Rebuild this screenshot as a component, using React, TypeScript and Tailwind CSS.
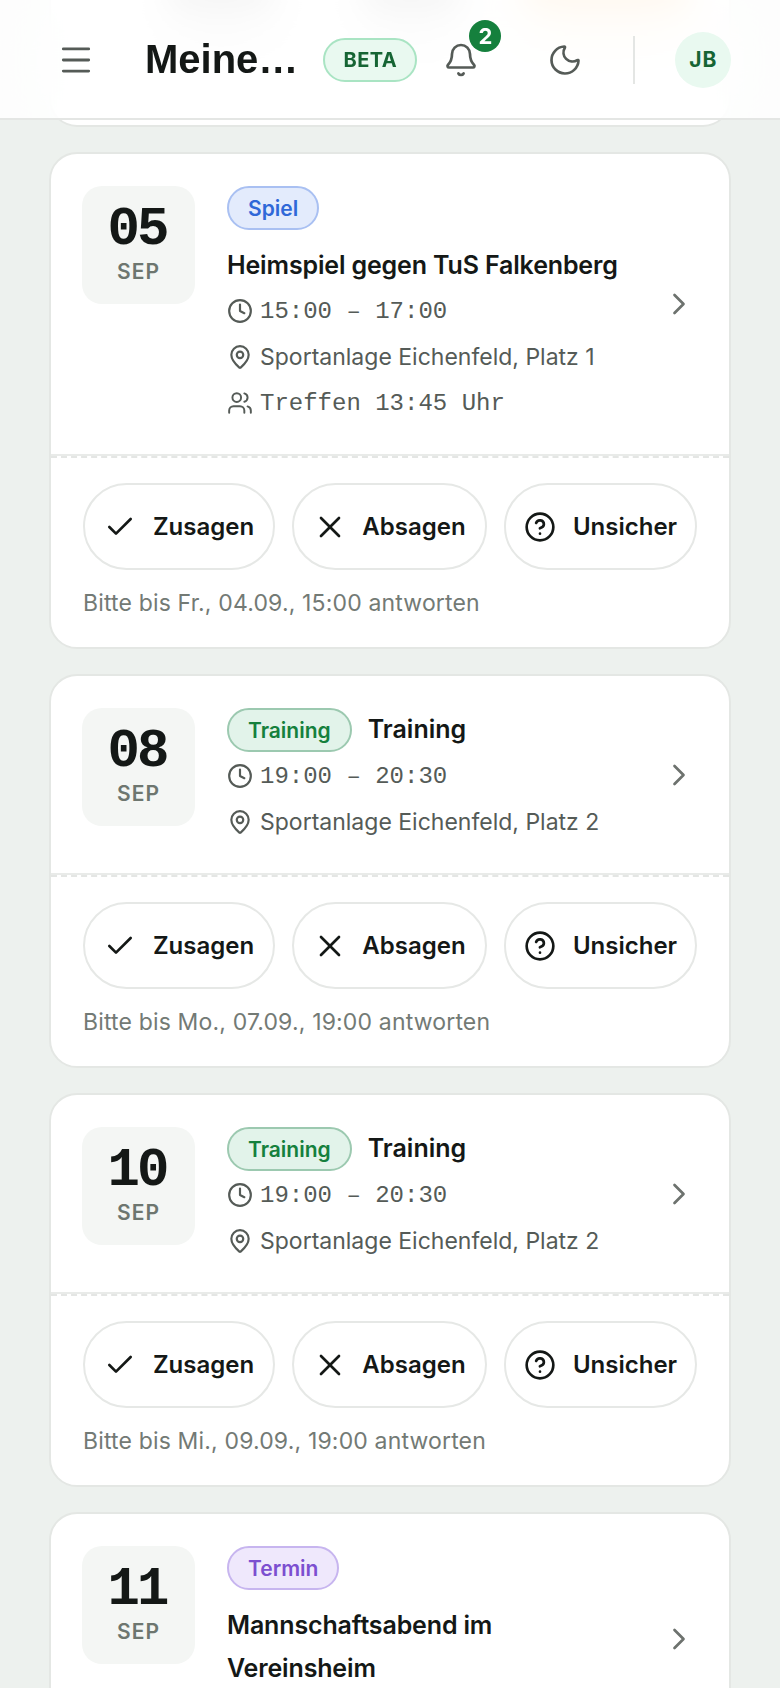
import { Bell, Check, ChevronRight, CircleHelp, Clock, MapPin, Menu, Moon, Users, X } from "lucide-react";

const SANS = "font-['Inter','Noto_Sans',sans-serif]";

type Rsvp = { date: string; month: string; kind: "Spiel" | "Training" | "Termin" };

const KIND_STYLES = {
  Spiel: "bg-[#e3ebfc] border-[#a9c0f2] text-[#2f68d8]",
  Training: "bg-[#e2f3ea] border-[#9cc9b0] text-[#15803d]",
  Termin: "bg-[#efe8fc] border-[#c7b5ef] text-[#7c4fd0]",
};

function Chip({ kind }: { kind: Rsvp["kind"] }) {
  return (
    <span
      className={`inline-flex h-[44px] items-center rounded-full border-2 px-[19px] pt-[1px] text-[21px] font-semibold ${KIND_STYLES[kind]}`}
    >
      {kind}
    </span>
  );
}

function DateBox({ day }: { day: string }) {
  return (
    <div className="flex h-[118px] w-[113px] shrink-0 flex-col items-center rounded-[20px] bg-[#f4f6f4] pt-[16px]">
      <span className="pr-[3px] font-['Liberation_Mono',monospace] text-[54px] leading-[56px] font-bold tracking-[-3px] text-[#141816]">
        {day}
      </span>
      <span className="text-[21px] leading-[28px] font-semibold tracking-[1px] text-[#6d766f]">SEP</span>
    </div>
  );
}

function MetaRow({ icon, children, mono }: { icon: React.ReactNode; children: React.ReactNode; mono?: boolean }) {
  return (
    <div
      className={`flex h-[46px] items-center gap-[7px] text-[#555b57] ${
        mono ? "font-['Liberation_Mono',monospace] text-[24px]" : "text-[23px]"
      }`}
    >
      <span className="flex w-[26px] shrink-0 justify-center">{icon}</span>
      <span className={mono ? "pt-[2px]" : ""}>{children}</span>
    </div>
  );
}

function RsvpButton({ icon, label, width }: { icon: React.ReactNode; label: string; width: string }) {
  return (
    <button
      className={`flex h-[87px] items-center justify-center gap-[17px] rounded-full border-2 border-[#e6e8e6] bg-white text-[24px] font-semibold text-[#141816] ${width}`}
    >
      {icon}
      {label}
    </button>
  );
}

function Actions({ deadline }: { deadline: string }) {
  return (
    <div className="border-t-2 border-dashed border-[#e4e6e4] px-[32px] pt-[25px] pb-[28px]">
      <div className="flex gap-[17px]">
        <RsvpButton width="w-[192px]" label="Zusagen" icon={<Check size={32} strokeWidth={2} />} />
        <RsvpButton
          width="w-[195px]"
          label="Absagen"
          icon={<X className="-mr-[3px] -ml-[1px]" size={36} strokeWidth={1.8} />}
        />
        <RsvpButton width="w-[193px]" label="Unsicher" icon={<CircleHelp size={32} strokeWidth={2} />} />
      </div>
      <p className="mt-[17px] text-[23px] leading-[32px] tracking-[0.16px] text-[#737a75]">{deadline}</p>
    </div>
  );
}

const clock = <Clock size={26} strokeWidth={2} />;
const pin = <MapPin size={26} strokeWidth={2} />;
const users = <Users size={26} strokeWidth={1.8} />;

function Card({ children, deadline }: { children: React.ReactNode; deadline?: string }) {
  return (
    <section className="rounded-[28px] border-2 border-[#e4e7e4] bg-white">
      <div
        className={`flex items-center pt-[32px] pr-[32px] pb-[28px] pl-[31px] ${
          deadline ? "border-b-2 border-[#e9ebe9]" : ""
        }`}
      >
        {children}
        <ChevronRight className="ml-auto -mt-[4px] shrink-0 text-[#6d726e]" size={36} strokeWidth={1.8} />
      </div>
      {deadline && <Actions deadline={deadline} />}
    </section>
  );
}

function TrainingCard({ day, deadline }: { day: string; deadline: string }) {
  return (
    <Card deadline={deadline}>
      <div className="flex flex-1 gap-[32px] self-start">
        <DateBox day={day} />
        <div>
          <div className="flex items-center gap-[16px]">
            <Chip kind="Training" />
            <span className="text-[25px] font-semibold text-[#141816]">Training</span>
          </div>
          <div className="mt-[1px]">
            <MetaRow mono icon={clock}>19:00 – 20:30</MetaRow>
            <MetaRow icon={pin}>Sportanlage Eichenfeld, Platz 2</MetaRow>
          </div>
        </div>
      </div>
    </Card>
  );
}

export default function App() {
  return (
    <div className={`relative h-[1688px] overflow-hidden bg-[#edf1ee] ${SANS}`}>
      {/* header sits over the scrolled list */}
      <header className="absolute inset-x-0 top-0 z-10 flex h-[120px] items-center border-b-2 border-[#e4e6e4] bg-white/85 pt-[2px] pl-[57px] backdrop-blur-[28px]">
        <Menu className="shrink-0 text-[#555b57]" size={38} strokeWidth={1.8} />
        <h1 className="ml-[50px] -mt-[2px] font-['Liberation_Sans',sans-serif] text-[40px] font-bold text-[#141816]">
          Meine…
        </h1>
        <span className="ml-[25px] flex h-[44px] w-[94px] items-center justify-center rounded-full border-2 border-[#a9e4c3] bg-[#e9f9f0] text-[20px] font-bold tracking-[0.5px] text-[#166534]">
          BETA
        </span>
        <span className="relative ml-[26px]">
          <Bell className="text-[#555b57]" size={36} strokeWidth={1.8} />
          <span className="absolute -top-[22px] left-[26px] flex h-[32px] w-[32px] items-center justify-center rounded-full bg-[#15803d] text-[22px] font-bold text-white">
            2
          </span>
        </span>
        <Moon className="ml-[68px] text-[#555b57]" size={36} strokeWidth={1.8} />
        <span className="ml-[50px] h-[48px] w-[2px] bg-[#e4e6e4]" />
        <span className="ml-[40px] flex h-[56px] w-[56px] items-center justify-center rounded-full bg-[#e9f9f0] text-[21px] font-bold tracking-[1px] text-[#166534]">
          JB
        </span>
      </header>

      <main className="flex flex-col gap-[25px] px-[49px]">
        {/* previous card, scrolled mostly under the header */}
        <section className="relative h-[127px] overflow-hidden rounded-b-[28px] border-2 border-t-0 border-[#e4e7e4] bg-white">
          <span className="absolute top-[-20px] left-[115px] h-[40px] w-[110px] rounded-full bg-[#a8a8a8] blur-[16px]" />
          <span className="absolute top-[-20px] left-[310px] h-[40px] w-[100px] rounded-full bg-[#a8a8a8] blur-[16px]" />
          <span className="absolute top-[-20px] left-[470px] h-[40px] w-[170px] rounded-full bg-[#f8c47e] blur-[16px]" />
        </section>

        <Card deadline="Bitte bis Fr., 04.09., 15:00 antworten">
          <div className="flex flex-1 gap-[32px] self-start">
            <DateBox day="05" />
            <div>
              <Chip kind="Spiel" />
              <h2 className="mt-[14px] text-[25px] leading-[42px] font-semibold tracking-[-0.15px] text-[#141816]">
                Heimspiel gegen TuS Falkenberg
              </h2>
              <div className="mt-[2px]">
                <MetaRow mono icon={clock}>15:00 – 17:00</MetaRow>
                <MetaRow icon={pin}>Sportanlage Eichenfeld, Platz 1</MetaRow>
                <MetaRow mono icon={users}>Treffen 13:45 Uhr</MetaRow>
              </div>
            </div>
          </div>
        </Card>

        <TrainingCard day="08" deadline="Bitte bis Mo., 07.09., 19:00 antworten" />
        <TrainingCard day="10" deadline="Bitte bis Mi., 09.09., 19:00 antworten" />

        <Card>
          <div className="flex flex-1 gap-[32px] self-start">
            <DateBox day="11" />
            <div className="pb-[46px]">
              <Chip kind="Termin" />
              <h2 className="mt-[14px] text-[25px] leading-[43px] font-semibold tracking-[-0.15px] text-[#141816]">
                Mannschaftsabend im
                <br />
                Vereinsheim
              </h2>
            </div>
          </div>
        </Card>
      </main>
    </div>
  );
}
